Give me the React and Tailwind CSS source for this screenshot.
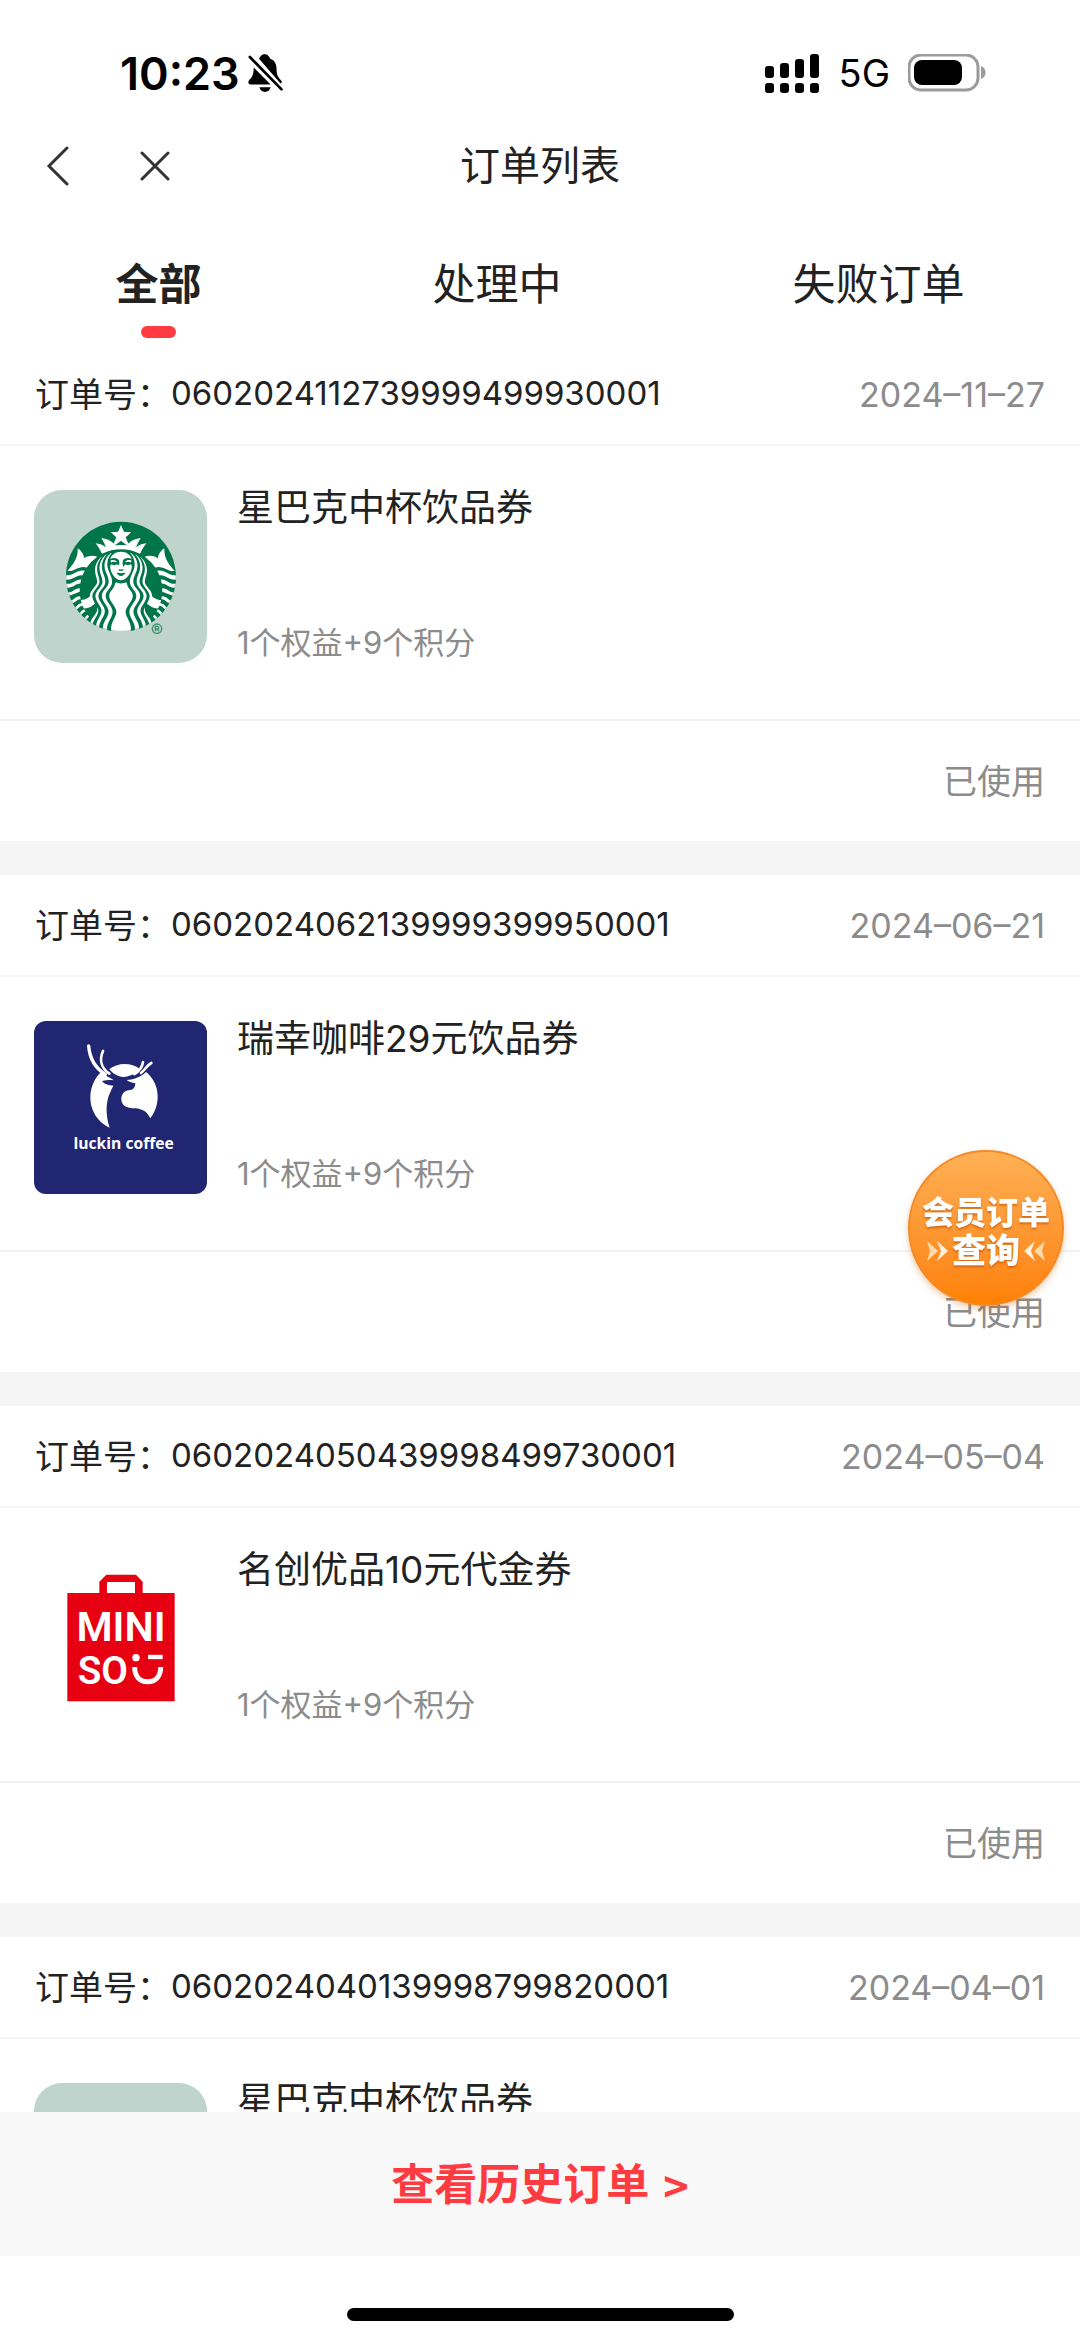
import React, { useState } from 'react';
import { SiStarbucks } from 'react-icons/si';

const tabs = ['全部', '处理中', '失败订单'];

const orders = [
  {
    id: '0602024112739999499930001',
    date: '2024–11–27',
    title: '星巴克中杯饮品券',
    cost: '1个权益+9个积分',
    status: '已使用',
    logo: StarbucksLogo,
  },
  {
    id: '0602024062139999399950001',
    date: '2024–06–21',
    title: '瑞幸咖啡29元饮品券',
    cost: '1个权益+9个积分',
    status: '已使用',
    logo: LuckinLogo,
  },
  {
    id: '0602024050439998499730001',
    date: '2024–05–04',
    title: '名创优品10元代金券',
    cost: '1个权益+9个积分',
    status: '已使用',
    logo: MinisoLogo,
  },
  {
    id: '0602024040139998799820001',
    date: '2024–04–01',
    title: '星巴克中杯饮品券',
    cost: '1个权益+9个积分',
    status: '已使用',
    logo: StarbucksLogo,
  },
];

function StarbucksLogo() {
  return (
    <svg viewBox="0 0 519 519" className="size-full rounded-[28px] bg-[#bfd4cc]" role="img" aria-label="Starbucks">
      <circle cx="261" cy="259" r="163" fill="#fff" />
      <SiStarbucks x="96" y="94" size={330} color="#00754a" />
      <g stroke="#3f8f70" fill="none" strokeWidth="4">
        <circle cx="369" cy="416" r="14" />
        <path d="M364 424v-15h6a4 4 0 0 1 0 8h-6m6 0 5 7" />
      </g>
    </svg>
  );
}

function LuckinLogo() {
  return (
    <svg viewBox="12 31 519 519" className="size-full rounded-xl bg-[#212672]" role="img" aria-label="luckin coffee">
      <path
        d="M213 184C196 200 181 228 181 260C181 302 205 336 239 351C229 322 226 287 236 257C242 240 247 232 250 225C238 223 224 223 216 211C230 207 242 207 252 209C239 201 225 194 213 184Z"
        fill="#fff"
      />
      <path d="M238 175C250 166 267 160 284 160C301 160 317 165 329 174C316 189 299 198 280 199C263 197 248 190 238 175Z" fill="#fff" />
      <path
        d="M348 184C371 202 384 230 383 261C382 285 374 306 361 323C351 303 339 295 315 293C291 293 274 285 274 265C274 249 284 239 301 238C309 237 315 233 316 218C305 216 297 213 290 208C314 206 333 199 348 184Z"
        fill="#fff"
      />
      <g fill="none" stroke="#fff" strokeLinecap="round">
        <path d="M176 106C179 143 192 170 226 191" strokeWidth="10" />
        <path d="M219 121C207 149 215 174 238 189" strokeWidth="8" />
        <path d="M339 154C337 170 328 181 313 190" strokeWidth="8" />
        <path d="M364 157C350 164 345 178 333 187" strokeWidth="8" />
      </g>
      <text x="281" y="414" textAnchor="middle" fontSize="47" fontWeight="700" fill="#fff" fontFamily="'Open Sans', sans-serif">
        luckin coffee
      </text>
    </svg>
  );
}

function MinisoLogo() {
  return (
    <svg viewBox="12 6 519 519" className="size-full" role="img" aria-label="MINISO">
      <path d="M112 129H208V95L229 74H318L338 95V129H434V454H112ZM231 96V129H315V96Z" fill="#e60012" fillRule="evenodd" />
      <g fill="#fff" fontFamily="Roboto, sans-serif" fontWeight="600">
        <text x="273" y="272" textAnchor="middle" fontSize="124">
          MINI
        </text>
        <text x="143" y="401" fontSize="116">
          SO
        </text>
      </g>
      <circle cx="318" cy="323" r="11" fill="#fff" />
      <path d="M354 321H398" stroke="#fff" strokeWidth="13" />
      <path d="M314 351C314 380 330 395 353 395C376 395 392 380 392 351" fill="none" stroke="#fff" strokeWidth="15" />
    </svg>
  );
}

function StatusBar() {
  return (
    <div className="flex h-[120px] items-center justify-between pt-[26px] pr-[94px] pl-[120px] text-black">
      <div className="flex items-center gap-2">
        <span className="text-[45px] leading-none font-semibold">10:23</span>
        <svg viewBox="0 0 105 115" className="h-[38px] w-[35px]" aria-label="静音">
          <path d="M33 14C38 8 39 1 50 1C61 1 62 8 67 14C80 18 86 31 86 45C86 65 90 70 100 80C103 84 102 88 98 89Z" />
          <path d="M17 41L68 92H7C-1 91-1 83 4 78C15 67 16 60 17 41Z" />
          <path d="M34 101H68C66 110 59 115 51 115C43 115 36 110 34 101Z" />
          <path d="M5 9L101 107" stroke="#fff" strokeWidth="18" />
          <path d="M5 9L101 107" stroke="#000" strokeWidth="8" strokeLinecap="round" />
        </svg>
      </div>
      <div className="flex items-center">
        <svg viewBox="0 0 56 39" className="h-[39px] w-14" aria-label="信号">
          <rect x="0" y="12" width="9" height="12" rx="3" />
          <rect x="15" y="9" width="9" height="15" rx="3" />
          <rect x="30" y="5" width="9" height="19" rx="3" />
          <rect x="45" y="0" width="9" height="24" rx="3" />
          <rect x="0" y="29" width="9" height="10" rx="3" />
          <rect x="15" y="29" width="9" height="10" rx="3" />
          <rect x="30" y="29" width="9" height="10" rx="3" />
          <rect x="45" y="29" width="9" height="10" rx="3" />
        </svg>
        <span className="ml-[18px] text-[38px] leading-none">5G</span>
        <svg viewBox="0 0 78 38" className="ml-[18px] h-[38px] w-[78px]" aria-label="电量">
          <rect x="1" y="1" width="69" height="35" rx="12" fill="none" stroke="#9b9b9b" strokeWidth="3" />
          <rect x="6" y="6" width="48" height="25" rx="8" />
          <path d="M73 12C79 14 79 23 73 25Z" fill="#9b9b9b" />
        </svg>
      </div>
    </div>
  );
}

function OrderCard({ order }) {
  const Logo = order.logo;

  return (
    <article className="bg-white">
      <div className="flex h-[102px] items-center justify-between border-b-2 border-[#f4f4f4] px-[35px] text-[34px]">
        <h2 className="flex items-center">
          <span>订单号：</span>
          <span className="text-[33px]">{order.id}</span>
        </h2>
        <time className="text-[#8c8c8c]">{order.date}</time>
      </div>
      <div className="flex gap-[30px] border-b-2 border-[#f2f2f2] px-[34px] pt-11 pb-14">
        <div className="size-[173px] shrink-0">
          <Logo />
        </div>
        <div className="flex flex-col justify-between">
          <h3 className="text-[37px] leading-9">{order.title}</h3>
          <p className="text-[31px] leading-10 text-[#8c8c8c]">{order.cost}</p>
        </div>
      </div>
      <div className="flex h-[120px] items-center justify-end px-[35px] text-[34px] text-[#8c8c8c]">{order.status}</div>
    </article>
  );
}

export default function App() {
  const [active, setActive] = useState(0);

  return (
    <div className="relative flex h-screen flex-col overflow-hidden bg-white font-[Inter,'Noto_Sans_CJK_SC',sans-serif] text-[#222]">
      <StatusBar />

      <header className="grid h-[92px] grid-cols-3 items-center px-11">
        <div className="flex items-center gap-[68px]">
          <button type="button" aria-label="返回">
            <svg viewBox="0 0 28 40" className="h-10 w-7" fill="none" stroke="#333" strokeWidth="3" strokeLinecap="round">
              <path d="M23 2L5 20L23 38" />
            </svg>
          </button>
          <button type="button" aria-label="关闭">
            <svg viewBox="0 0 30 30" className="size-[30px]" fill="none" stroke="#333" strokeWidth="3" strokeLinecap="round">
              <path d="M2 2L28 28M28 2L2 28" />
            </svg>
          </button>
        </div>
        <h1 className="text-center text-[40px] leading-none">订单列表</h1>
      </header>

      <nav className="flex h-[132px] items-start justify-around pt-10">
        {tabs.map((tab, index) => (
          <button
            key={tab}
            type="button"
            onClick={() => setActive(index)}
            className={`flex flex-col items-center gap-[10px] text-[43px] leading-[64px] ${index === active ? 'font-bold' : ''}`}
          >
            {tab}
            {index === active && <span className="h-3 w-[35px] rounded-full bg-[#fe3b40]" />}
          </button>
        ))}
      </nav>

      <main className="flex min-h-0 flex-1 flex-col gap-[34px] overflow-y-auto bg-[#f5f5f5] [scrollbar-width:none]">
        {orders.map((order) => (
          <OrderCard key={order.id} order={order} />
        ))}
      </main>

      <footer>
        <a
          href="#history"
          className="flex h-36 items-center justify-center gap-[14px] bg-[#f8f8f8] text-[43px] font-bold text-[#fe3b40]"
        >
          查看历史订单
          <span className="font-['Noto_Sans_CJK_SC',sans-serif]">&gt;</span>
        </a>
        <div className="flex h-[85px] items-end justify-center pb-5">
          <div className="h-[13px] w-[387px] rounded-full bg-black" />
        </div>
      </footer>

      <button
        type="button"
        className="absolute right-4 bottom-[1035px] flex size-[156px] flex-col items-center justify-center rounded-full border-2 border-[#f58a25] bg-linear-to-b from-[#ffb054] via-[#fd9833] to-[#ff8100] pt-2 text-[32px] leading-[38px] font-black text-white shadow-[0_3px_6px_rgba(200,100,0,0.35)] text-shadow-[0_2px_2px_rgba(190,80,0,0.6)]"
      >
        <span>会员订单</span>
        <span className="flex items-center gap-1 text-[34px]">
          <svg viewBox="0 0 22 22" className="size-[22px]" aria-hidden="true">
            <path d="M1 1L12 11L1 21L4 11Z" fill="#ffd9a8" />
            <path d="M11 1L22 11L11 21L15 11Z" fill="#fff0dc" />
          </svg>
          查询
          <svg viewBox="0 0 22 22" className="size-[22px]" aria-hidden="true">
            <path d="M21 1L10 11L21 21L18 11Z" fill="#ffd9a8" />
            <path d="M11 1L0 11L11 21L7 11Z" fill="#fff0dc" />
          </svg>
        </span>
      </button>
    </div>
  );
}
